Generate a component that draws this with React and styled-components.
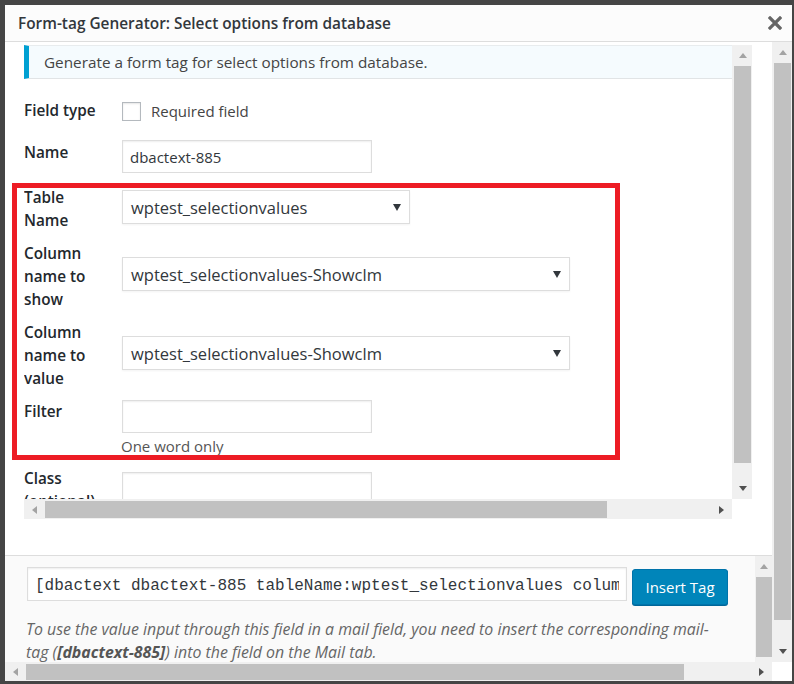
import React from 'react';
import styled, { createGlobalStyle } from 'styled-components';

const Global = createGlobalStyle`
  html, body { margin: 0; padding: 0; background: #454545; }
  body { font-family: "Open Sans", "Noto Sans", sans-serif; }
  * { box-sizing: border-box; }
`;

const Page = styled.div`
  width: 794px;
  height: 684px;
  padding: 5px 2px 3px 5px;
  background: #454545;
  overflow: hidden;
  display: flex;
`;

const Modal = styled.div`
  position: relative;
  width: 787px;
  height: 676px;
  background: #fff;
  display: flex;
  flex-direction: column;
  overflow: hidden;
`;

const Header = styled.div`
  flex: none;
  height: 37px;
  background: #fcfcfc;
  border-bottom: 1px solid #dddddd;
  display: flex;
  align-items: center;
  justify-content: space-between;
  padding: 0 9px 0 13px;
`;

const Title = styled.h1`
  margin: 0;
  font-size: 15.4px;
  font-weight: 600;
  color: #32373c;
`;

const CloseBtn = styled.button`
  border: 0;
  background: none;
  padding: 0;
  width: 16px;
  height: 16px;
  display: flex;
  align-items: center;
  justify-content: center;
`;

const Body = styled.div`
  flex: 1;
  min-height: 0;
  display: flex;
`;

const MainCol = styled.div`
  flex: 1;
  min-width: 0;
  display: flex;
  flex-direction: column;
`;

const Upper = styled.div`
  flex: none;
  height: 514px;
  padding: 3px 20px 0 19px;
  border-bottom: 1px solid #dddddd;
`;

const ScrollBox = styled.div`
  display: grid;
  grid-template-columns: 1fr 20px;
  grid-template-rows: 454px 20px;
  width: 728px;
`;

const Content = styled.div`
  overflow: hidden;
  min-width: 0;
`;

const Notice = styled.div`
  height: 34px;
  display: flex;
  align-items: center;
  background: #f5fbfe;
  border-top: 1px solid #e8ecee;
  border-bottom: 1px solid #e1e4e6;
  border-left: 5px solid #00a0d2;
  padding-left: 15px;
  font-size: 15.3px;
  color: #444;
`;

const Form = styled.div`
  display: flex;
  flex-direction: column;
`;

const Row = styled.div`
  display: grid;
  grid-template-columns: 98px 1fr;
  align-items: start;
  margin-top: ${p => p.$mt}px;
`;

const Label = styled.div`
  width: 80px;
  padding-top: ${p => p.$pt || 0}px;
  font-size: 15.3px;
  font-weight: 600;
  line-height: 23px;
  color: #23282d;
`;

const Field = styled.div`
  padding-top: ${p => p.$pt || 0}px;
  display: flex;
  flex-direction: column;
  align-items: flex-start;
`;

const CheckLine = styled.label`
  display: flex;
  align-items: center;
  gap: 10px;
  font-size: 15px;
  color: #444;
  line-height: 19px;
`;

const Check = styled.span`
  width: 19px;
  height: 19px;
  border: 1px solid #b4b9be;
  background: #fff;
  box-shadow: inset 0 1px 2px rgba(0, 0, 0, 0.1);
`;

const TextInput = styled.div`
  width: ${p => p.$w}px;
  height: 33px;
  border: 1px solid #dddddd;
  box-shadow: inset 0 1px 2px rgba(0, 0, 0, 0.07);
  background: #fff;
  padding: 0 7px;
  display: flex;
  align-items: center;
  font-size: 15px;
  color: #32373c;
`;

const Select = styled.div`
  width: ${p => p.$w}px;
  height: 34px;
  border: 1px solid #dddddd;
  box-shadow: 0 1px 2px rgba(0, 0, 0, 0.05);
  background: #fff;
  padding: 0 8px 0 8px;
  display: flex;
  align-items: center;
  justify-content: space-between;
  font-size: 16.5px;
  color: #32373c;
`;

const Caret = styled.span`
  width: 0;
  height: 0;
  border-left: 4px solid transparent;
  border-right: 4px solid transparent;
  border-top: 7px solid #32373c;
`;

const Desc = styled.div`
  margin-top: 2px;
  font-size: 15px;
  line-height: 22px;
  color: #555;
  margin-left: -1px;
`;

const VBar = styled.div`
  width: ${p => p.$w}px;
  flex: none;
  background: #f0f0f0;
  display: flex;
  flex-direction: column;
  padding: 0 ${p => p.$pr ?? 1}px 0 ${p => p.$pl ?? 2}px;
  min-height: 0;
  overflow: hidden;
`;

const HBar = styled.div`
  height: ${p => p.$h}px;
  background: #f0f0f0;
  display: flex;
  padding: 2px 0 1px 0;
  min-width: 0;
  flex: ${p => (p.$grow ? 1 : 'none')};
`;

const ArrowBox = styled.div`
  flex: none;
  width: ${p => p.$w || '100%'};
  height: ${p => p.$h || '100%'};
  display: flex;
  align-items: center;
  justify-content: center;
`;

const Track = styled.div`
  flex: 1;
  min-width: 0;
  min-height: 0;
  display: flex;
  flex-direction: ${p => (p.$vertical ? 'column' : 'row')};
`;

const Thumb = styled.div`
  flex: none;
  background: #c1c1c1;
  ${p =>
    p.$vertical
      ? `width: 100%; height: ${p.$len}px; margin-top: ${p.$off}px;`
      : `height: 100%; width: ${p.$len}px; margin-left: ${p.$off}px;`}
`;

const Tri = styled.span`
  width: 0;
  height: 0;
  ${p => {
    const c = p.$c;
    switch (p.$dir) {
      case 'up':
        return `border-left:4.5px solid transparent;border-right:4.5px solid transparent;border-bottom:5px solid ${c};`;
      case 'down':
        return `border-left:4.5px solid transparent;border-right:4.5px solid transparent;border-top:5px solid ${c};`;
      case 'left':
        return `border-top:4.5px solid transparent;border-bottom:4.5px solid transparent;border-right:5px solid ${c};`;
      default:
        return `border-top:4.5px solid transparent;border-bottom:4.5px solid transparent;border-left:5px solid ${c};`;
    }
  }}
`;

const Corner = styled.div`
  background: ${p => p.$bg || '#fff'};
  width: ${p => p.$w || 'auto'};
  flex: none;
`;

const Bottom = styled.div`
  flex: 1;
  min-height: 0;
  display: flex;
`;

const BottomContent = styled.div`
  flex: 1;
  min-width: 0;
  background: #fafafa;
  padding: 11px 0 0 22px;
  overflow: hidden;
`;

const TagRow = styled.div`
  display: flex;
  align-items: flex-start;
  gap: 5px;
`;

const TagCode = styled.div`
  width: 600px;
  height: 34px;
  border: 1px solid #dddddd;
  background: #fff;
  box-shadow: inset 0 1px 2px rgba(0, 0, 0, 0.07);
  padding: 3px 7px 0;
  display: flex;
  align-items: center;
  overflow: hidden;
`;

const TagText = styled.span`
  display: block;
  width: 585px;
  overflow: hidden;
  white-space: nowrap;
  font-family: "Liberation Mono", "DejaVu Sans Mono", monospace;
  font-size: 16px;
  color: #32373c;
`;

const InsertButton = styled.button`
  margin-top: 2px;
  width: 96px;
  height: 36px;
  border: 1px solid #0073aa;
  border-radius: 3px;
  background: #0085ba;
  box-shadow: 0 1px 0 #006799;
  color: #fff;
  font-family: "Open Sans", "Noto Sans", sans-serif;
  font-size: 15px;
  padding: 0;
`;

const Hint = styled.p`
  margin: 13px 0 0 -1px;
  font-size: 15.9px;
  font-style: italic;
  line-height: 23px;
  color: #666;
  white-space: nowrap;
  strong { font-weight: 700; color: #555; }
`;

const BottomRow = styled.div`
  flex: none;
  height: 19px;
  display: flex;
`;

const Annotation = styled.div`
  position: absolute;
  left: 7px;
  top: 178px;
  width: 608px;
  height: 277px;
  border: 5px solid #ed1c24;
  pointer-events: none;
`;

function VScroll({ w, thumbOff, thumbLen, up = '#a3a3a3', down = '#505050', showDown = true, arrowH = 21, pl, pr }) {
  return (
    <VBar $w={w} $pl={pl} $pr={pr}>
      <ArrowBox $h={`${arrowH}px`}><Tri $dir="up" $c={up} /></ArrowBox>
      <Track $vertical>
        <Thumb $vertical $off={thumbOff} $len={thumbLen} />
      </Track>
      {showDown && <ArrowBox $h={`${arrowH}px`}><Tri $dir="down" $c={down} /></ArrowBox>}
    </VBar>
  );
}

function HScroll({ h, thumbOff, thumbLen, left = '#a3a3a3', right = '#505050', grow, arrowW = 21 }) {
  return (
    <HBar $h={h} $grow={grow}>
      <ArrowBox $w={`${arrowW}px`}><Tri $dir="left" $c={left} /></ArrowBox>
      <Track>
        <Thumb $off={thumbOff} $len={thumbLen} />
      </Track>
      <ArrowBox $w={`${arrowW}px`}><Tri $dir="right" $c={right} /></ArrowBox>
    </HBar>
  );
}

export default function App() {
  return (
    <>
      <Global />
      <Page>
        <Modal>
          <Header>
            <Title>Form-tag Generator: Select options from database</Title>
            <CloseBtn aria-label="Close">
              <svg width="14" height="14" viewBox="0 0 14 14">
                <path d="M2 2 L12 12 M12 2 L2 12" stroke="#666" strokeWidth="3.2" strokeLinecap="square" />
              </svg>
            </CloseBtn>
          </Header>
          <Body>
            <MainCol>
              <Upper>
                <ScrollBox>
                  <Content>
                    <Notice>Generate a form tag for select options from database.</Notice>
                    <Form>
                      <Row $mt={20}>
                        <Label>Field type</Label>
                        <Field $pt={3}>
                          <CheckLine><Check />Required field</CheckLine>
                        </Field>
                      </Row>
                      <Row $mt={18}>
                        <Label $pt={1}>Name</Label>
                        <Field>
                          <TextInput $w={250}>dbactext-885</TextInput>
                        </Field>
                      </Row>
                      <Row $mt={13}>
                        <Label>Table Name</Label>
                        <Field $pt={4}>
                          <Select $w={288}>wptest_selectionvalues<Caret /></Select>
                        </Field>
                      </Row>
                      <Row $mt={10}>
                        <Label>Column name to show</Label>
                        <Field $pt={15}>
                          <Select $w={448}>wptest_selectionvalues-Showclm<Caret /></Select>
                        </Field>
                      </Row>
                      <Row $mt={10}>
                        <Label>Column name to value</Label>
                        <Field $pt={15}>
                          <Select $w={448}>wptest_selectionvalues-Showclm<Caret /></Select>
                        </Field>
                      </Row>
                      <Row $mt={10}>
                        <Label>Filter</Label>
                        <Field>
                          <TextInput $w={250} />
                          <Desc>One word only</Desc>
                        </Field>
                      </Row>
                      <Row $mt={10}>
                        <Label>Class (optional)</Label>
                        <Field $pt={5}>
                          <TextInput $w={250} />
                        </Field>
                      </Row>
                    </Form>
                  </Content>
                  <VScroll w={20} thumbOff={0} thumbLen={397} />
                  <HScroll h={20} thumbOff={0} thumbLen={562} />
                  <Corner />
                </ScrollBox>
              </Upper>
              <Bottom>
                <BottomContent>
                  <TagRow>
                    <TagCode>
                      <TagText>[dbactext dbactext-885 tableName:wptest_selectionvalues colum</TagText>
                    </TagCode>
                    <InsertButton>Insert Tag</InsertButton>
                  </TagRow>
                  <Hint>
                    To use the value input through this field in a mail field, you need to insert the corresponding mail-
                    <br />
                    tag (<strong>[dbactext-885]</strong>) into the field on the Mail tab.
                  </Hint>
                </BottomContent>
                <VScroll w={17} thumbOff={0} thumbLen={80} showDown={false} pl={1} pr={0} />
              </Bottom>
            </MainCol>
            <VScroll w={20} thumbOff={0} thumbLen={557} arrowH={21} pl={2} pr={1} />
          </Body>
          <BottomRow>
            <HScroll h={19} grow thumbOff={0} thumbLen={658} />
            <Corner $w="20px" />
          </BottomRow>
          <Annotation />
        </Modal>
      </Page>
    </>
  );
}
